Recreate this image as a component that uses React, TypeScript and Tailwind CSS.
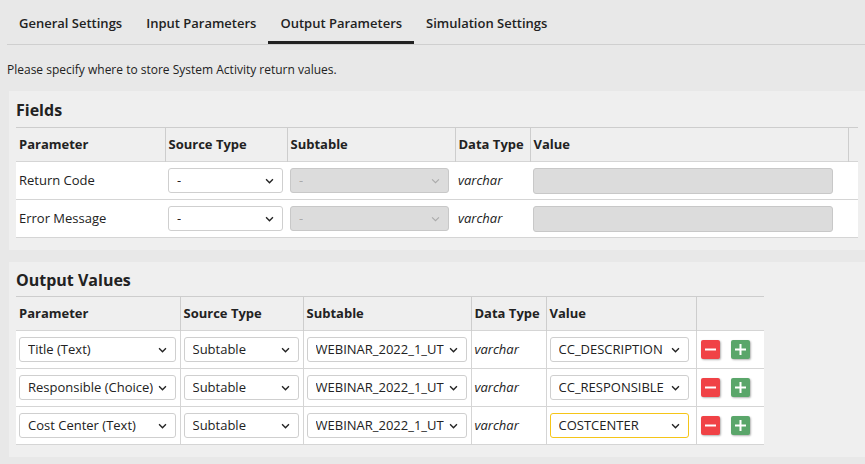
import React from "react";

const Chev = ({ light }: { light?: boolean }) => (
  <svg width="9" height="6" viewBox="0 0 10 7" className="shrink-0">
    <path d="M1 1.5l4 4 4-4" fill="none" stroke={light ? "#aaa" : "#222"} strokeWidth={light ? 1.2 : 1.6} />
  </svg>
);

const Sel = ({ text, w, disabled, focus }: { text: string; w: string; disabled?: boolean; focus?: boolean }) => (
  <div
    className={`${w} h-[25px] rounded-[3px] border flex items-center justify-between pl-2 pr-2 text-[13px] ${
      disabled ? "bg-[#dcdcdc] border-[#c8c8c8] text-[#aaa]" : focus ? "bg-white border-[#f5c518]" : "bg-white border-[#cfcfcf] text-[#222]"
    }`}
  >
    <span className="truncate">{text}</span>
    <Chev light={disabled} />
  </div>
);

const Btn = ({ plus }: { plus?: boolean }) => (
  <div className={`w-[19px] h-[19px] rounded-[2px] flex items-center justify-center shadow-[1px_1px_2px_rgba(0,0,0,0.3)] ${plus ? "bg-[#5aa66a]" : "bg-[#f04246]"}`}>
    <svg width="13" height="13" viewBox="0 0 13 13">
      <path d={plus ? "M1 6.5h11M6.5 1v11" : "M1 6.5h11"} stroke="white" strokeWidth="2" />
    </svg>
  </div>
);

const th = "text-left font-bold text-[13px] px-[3px] border-r border-[#cdcdcd] h-[34px] bg-[#efefef]";
const td = "px-[3px] border-t border-[#d5d5d5] bg-white h-[38px] text-[13px]";

export default function App() {
  return (
    <div className="w-[865px] h-[464px] bg-[#e8e8e8] text-[#222] overflow-hidden" style={{ fontFamily: '"Open Sans", sans-serif' }}>
      <div className="flex ml-[7px] border-b border-[#cfcfcf] h-[45px] text-[13px] font-semibold">
        {["General Settings", "Input Parameters", "Output Parameters", "Simulation Settings"].map((t, i) => (
          <div key={t} className={`px-[12px] flex items-center pt-[3px] ${i === 2 ? "border-b-[3px] border-[#222] pt-[6px]" : ""}`}>{t}</div>
        ))}
      </div>
      <div className="ml-[7px] mt-[16px] text-[12px]">Please specify where to store System Activity return values.</div>
      <div className="ml-[9px] mt-[12px] bg-[#efefef] pl-[7px] h-[159px]">
        <div className="h-[36px] flex items-center text-[16px] font-bold pt-[1px]">Fields</div>
        <table className="border-collapse w-[842px] border-t border-[#cdcdcd]">
          <thead>
            <tr>
              <th className={`${th} w-[149px]`}>Parameter</th>
              <th className={`${th} w-[122px]`}>Source Type</th>
              <th className={`${th} w-[168px]`}>Subtable</th>
              <th className={`${th} w-[75px]`}>Data Type</th>
              <th className={`${th} w-[318px]`}>Value</th>
              <th className={`${th} border-r-0`}></th>
            </tr>
          </thead>
          <tbody>
            {["Return Code", "Error Message"].map((p, i) => (
              <tr key={p} className={i === 1 ? "border-b border-[#d5d5d5]" : ""}>
                <td className={td}>{p}</td>
                <td className={td}><Sel text="-" w="w-[115px]" /></td>
                <td className={td}><Sel text="-" w="w-[159px]" disabled /></td>
                <td className={`${td} italic`}>varchar</td>
                <td className={td} colSpan={2}><div className="w-[300px] h-[26px] rounded-[3px] bg-[#dcdcdc] border border-[#c8c8c8]" /></td>
              </tr>
            ))}
          </tbody>
        </table>
      </div>
      <div className="ml-[9px] mt-[12px] bg-[#efefef] pl-[7px] h-[195px]">
        <div className="h-[34px] flex items-center text-[16px] font-bold pt-[1px]">Output Values</div>
        <table className="border-collapse w-[748px] border-t border-[#cdcdcd]">
          <thead>
            <tr>
              <th className={`${th} w-[164px]`}>Parameter</th>
              <th className={`${th} w-[123px]`}>Source Type</th>
              <th className={`${th} w-[168px]`}>Subtable</th>
              <th className={`${th} w-[75px]`}>Data Type</th>
              <th className={`${th} w-[150px]`}>Value</th>
              <th className={`${th} border-r-0`}></th>
            </tr>
          </thead>
          <tbody>
            {[
              ["Title (Text)", "CC_DESCRIPTION"],
              ["Responsible (Choice)", "CC_RESPONSIBLE"],
              ["Cost Center (Text)", "COSTCENTER"],
            ].map(([p, v], i) => (
              <tr key={p} className={i === 2 ? "border-b border-[#d5d5d5]" : ""}>
                <td className={`${td} border-r border-[#d5d5d5]`}><Sel text={p} w="w-[157px]" /></td>
                <td className={`${td} border-r border-[#d5d5d5]`}><Sel text="Subtable" w="w-[115px]" /></td>
                <td className={`${td} border-r border-[#d5d5d5]`}><Sel text="WEBINAR_2022_1_UT" w="w-[160px]" /></td>
                <td className={`${td} italic border-r border-[#d5d5d5]`}>varchar</td>
                <td className={`${td} border-r border-[#d5d5d5]`}><Sel text={v} w="w-[139px]" focus={i === 2} /></td>
                <td className={td}><div className="flex gap-[11px] pl-[1px]"><Btn /><Btn plus /></div></td>
              </tr>
            ))}
          </tbody>
        </table>
      </div>
    </div>
  );
}
